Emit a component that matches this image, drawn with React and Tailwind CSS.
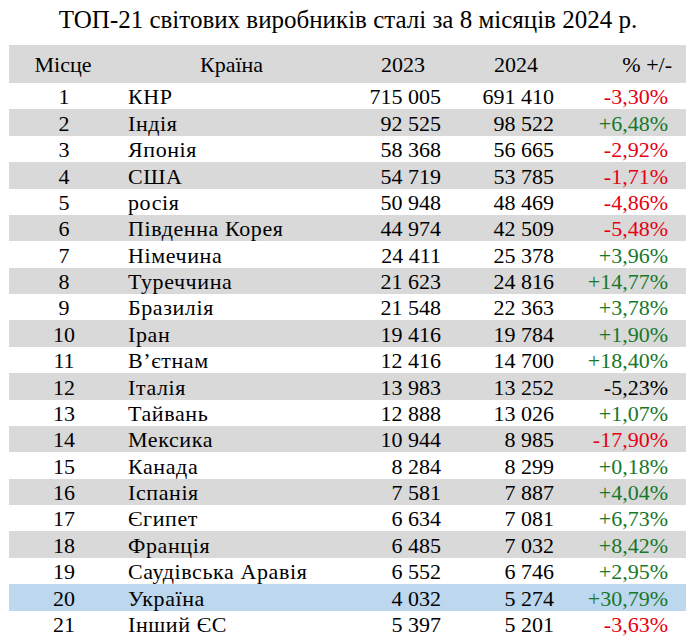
import React from 'react';

const ROWS = [
  [1, 'КНР', '715 005', '691 410', '-3,30%'],
  [2, 'Індія', '92 525', '98 522', '+6,48%'],
  [3, 'Японія', '58 368', '56 665', '-2,92%'],
  [4, 'США', '54 719', '53 785', '-1,71%'],
  [5, 'росія', '50 948', '48 469', '-4,86%'],
  [6, 'Південна Корея', '44 974', '42 509', '-5,48%'],
  [7, 'Німечина', '24 411', '25 378', '+3,96%'],
  [8, 'Туреччина', '21 623', '24 816', '+14,77%'],
  [9, 'Бразилія', '21 548', '22 363', '+3,78%'],
  [10, 'Іран', '19 416', '19 784', '+1,90%'],
  [11, 'В’єтнам', '12 416', '14 700', '+18,40%'],
  [12, 'Італія', '13 983', '13 252', '-5,23%', 'plain'],
  [13, 'Тайвань', '12 888', '13 026', '+1,07%'],
  [14, 'Мексика', '10 944', '8 985', '-17,90%'],
  [15, 'Канада', '8 284', '8 299', '+0,18%'],
  [16, 'Іспанія', '7 581', '7 887', '+4,04%'],
  [17, 'Єгипет', '6 634', '7 081', '+6,73%'],
  [18, 'Франція', '6 485', '7 032', '+8,42%'],
  [19, 'Саудівська Аравія', '6 552', '6 746', '+2,95%'],
  [20, 'Україна', '4 032', '5 274', '+30,79%'],
  [21, 'Інший ЄС', '5 397', '5 201', '-3,63%'],
];

const cols = 'grid grid-cols-[113px_240px_112px_113px_99px]';

const pctColor = (row) => {
  if (row[5] === 'plain') return 'text-black';
  return row[4].startsWith('-') ? 'text-[#e60012]' : 'text-[#17782a]';
};

const rowBg = (n) => {
  if (n === 20) return 'bg-[#bdd7ee]';
  return n % 2 === 0 ? 'bg-[#d9d9d9]' : 'bg-white';
};

export default function App() {
  return (
    <div className="w-[692px] h-[640px] bg-white text-black font-[Liberation_Serif,Times_New_Roman,serif]">
      <div className="h-[45px] pt-[7px] pl-[4px] text-center text-[25px] leading-none">
        ТОП-21 світових виробників сталі за 8 місяців 2024 р.
      </div>
      <div className="ml-[9px] w-[677px]">
        <div className={`${cols} h-[38px] items-end pb-[7px] bg-[#d9d9d9] text-[22px] leading-none`}>
          <div className="text-center pr-[5px]">Місце</div>
          <div className="pl-[78px]">Країна</div>
          <div className="text-right pr-[49px]">2023</div>
          <div className="text-right pr-[49px]">2024</div>
          <div className="text-right pr-[14px]">% +/-</div>
        </div>
        {ROWS.map((row) => (
          <div
            key={row[0]}
            className={`${cols} h-[26.38px] items-end pb-[1px] text-[22px] leading-none ${rowBg(row[0])}`}
          >
            <div className="text-center pr-[3px]">{row[0]}</div>
            <div className="pl-[6px] whitespace-nowrap tracking-[0.6px]">{row[1]}</div>
            <div className="text-right pr-[33px]">{row[2]}</div>
            <div className="text-right pr-[33px]">{row[3]}</div>
            <div className={`text-right pr-[18px] ${pctColor(row)}`}>{row[4]}</div>
          </div>
        ))}
      </div>
    </div>
  );
}
